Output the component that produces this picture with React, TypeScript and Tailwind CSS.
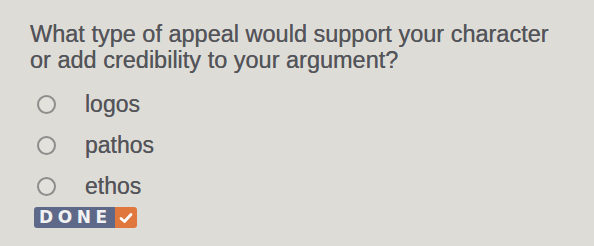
import React from "react";

const options = ["logos", "pathos", "ethos"];

export default function App() {
  return (
    <div
      className="w-[594px] h-[246px] bg-[#dddcd6] text-[#535459] overflow-hidden [text-shadow:0_0_0.6px_#6a6b70]"
      style={{ fontFamily: '"Liberation Sans", Arial, sans-serif' }}
    >
      <div className="pl-[30px] pt-[21px]">
        <p className="text-[23.5px] leading-[26px] w-[560px]">
          What type of appeal would support your character
          <br />
          or add credibility to your argument?
        </p>
        <div className="mt-[11px] flex flex-col pl-[7px]">
          {options.map((o) => (
            <div key={o} className="flex items-center h-[41px]">
              <span className="w-[19px] h-[19px] rounded-full border-[2px] border-[#8d8d8b] bg-[#e2e1db]" />
              <span className="ml-[29px] text-[23px] leading-[41px]">{o}</span>
            </div>
          ))}
        </div>
        <div className="ml-[4px] flex h-[21px] w-[103px] rounded-[3px] overflow-hidden [text-shadow:none]">
          <div
            className="flex-1 bg-[#5e6889] flex items-center pl-[5px] text-[#f2f2f2] font-bold text-[17px] leading-[21px] tracking-[4.6px]"
            style={{ fontFamily: '"DejaVu Sans", sans-serif' }}
          >
            DONE
          </div>
          <div className="w-[22px] bg-[#e0783e] flex items-center justify-center">
            <svg width="14" height="12" viewBox="0 0 14 12">
              <path d="M2 6.5 L5.5 9.5 L12 2.5" fill="none" stroke="white" strokeWidth="2.8" strokeLinecap="round" strokeLinejoin="round" />
            </svg>
          </div>
        </div>
      </div>
    </div>
  );
}
